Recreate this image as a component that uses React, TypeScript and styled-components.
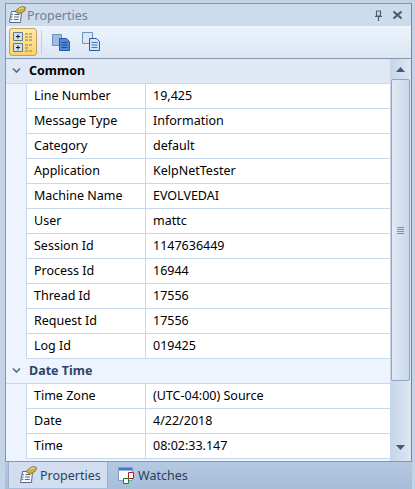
import React from 'react';
import styled, { createGlobalStyle } from 'styled-components';

const GlobalStyle = createGlobalStyle`
  html, body {
    margin: 0;
    padding: 0;
    background: #c3d3e8;
  }
  * {
    box-sizing: border-box;
  }
`;

const groups = [
  {
    name: 'Common',
    active: true,
    rows: [
      ['Line Number', '19,425'],
      ['Message Type', 'Information'],
      ['Category', 'default'],
      ['Application', 'KelpNetTester'],
      ['Machine Name', 'EVOLVEDAI'],
      ['User', 'mattc'],
      ['Session Id', '1147636449'],
      ['Process Id', '16944'],
      ['Thread Id', '17556'],
      ['Request Id', '17556'],
      ['Log Id', '019425'],
    ],
  },
  {
    name: 'Date Time',
    active: false,
    rows: [
      ['Time Zone', '(UTC-04:00) Source'],
      ['Date', '4/22/2018'],
      ['Time', '08:02:33.147'],
    ],
  },
];

function PropertiesIcon() {
  return (
    <svg width='18' height='18' viewBox='0 0 18 18'>
      <path d='M3.5 5.5h10l-1 11h-11z' fill='#f6f8fb' stroke='#5a6a80' />
      <path d='M3.5 8.5h1.5M6.5 8.5h5M3 11h1.5M6 11h5M2.8 13.5h1.5M5.8 13.5h5' stroke='#52698c' />
      <path d='M7 5.5l4-3.5 3-1.5 3.5 1-1 3.5-3 2-3.5.5z' fill='#cfae42' stroke='#75692f' strokeWidth='0.8' />
      <path d='M11 3l3-1.2 2 .6' fill='none' stroke='#f2e59c' />
    </svg>
  );
}

function WatchesIcon() {
  return (
    <svg width='17' height='17' viewBox='0 0 17 17'>
      <path d='M0.5 0.5h14v13h-14z' fill='#fdfdff' stroke='#7f9cc6' />
      <path d='M1 1h13v2.5H1z' fill='#3f78d0' />
      <path d='M10.5 5.5h5v6h-5z' fill='#fff' stroke='#a81f1f' />
      <path d='M5.5 11.5h5v5h-5z' fill='#fff' stroke='#1a7f28' />
    </svg>
  );
}

function CategorizedIcon() {
  return (
    <svg width='24' height='24' viewBox='0 0 24 24'>
      <path d='M2.5 2.5h9v8h-9zM2.5 13.5h9v8h-9z' fill='#cfe0f2' stroke='#62799a' />
      <path d='M5 6.5h4M7 4.5v4M5 17.5h4M7 15.5v4' stroke='#15181f' />
      <path d='M14 4h3M18 4h3M14 7h3M18 7h3M14 10h3M18 10h3M14 15h3M18 15h3M14 18h3M14 21h3M18 21h3' stroke='#a99c62' strokeWidth='1.5' />
    </svg>
  );
}

function PagesIcon({ flip }: { flip?: boolean }) {
  return (
    <svg width='20' height='20' viewBox='0 0 20 20'>
      <path
        d={flip ? 'M0.5 0.5h10v11h-10z' : 'M0.5 2.5h9v11h-9z'}
        fill={flip ? '#dce7f4' : '#9cbde4'}
        stroke='#6f90bd'
      />
      <path d='M7.5 6.5h7l3 3v9h-10z' fill={flip ? '#d3e2f4' : '#4f8ad4'} stroke='#2c5c9c' />
      <path d='M9.5 10.5h6M9.5 13h6M9.5 15.5h6' stroke={flip ? '#3f72b6' : '#1e4f96'} />
    </svg>
  );
}

export default function App() {
  return (
    <>
      <GlobalStyle />
      <Window>
        <Panel>
          <TitleBar>
            <PropertiesIcon />
            <TitleText>Properties</TitleText>
            <TitleButtons>
              <svg width='11' height='11' viewBox='0 0 11 11'>
                <path d='M3.5 1h4v5h-4zM2 6.5h7M5.5 7v4' fill='none' stroke='#4a5a78' strokeWidth='1.2' />
              </svg>
              <svg width='11' height='11' viewBox='0 0 11 11'>
                <path d='M1.5 1.5l8 7M9.5 1.5l-8 7' fill='none' stroke='#4a5a78' strokeWidth='2.2' />
              </svg>
            </TitleButtons>
          </TitleBar>
          <Toolbar>
            <ToolButton $active>
              <CategorizedIcon />
            </ToolButton>
            <ToolSeparator />
            <ToolButton>
              <PagesIcon />
            </ToolButton>
            <ToolButton>
              <PagesIcon flip />
            </ToolButton>
          </Toolbar>
          <Body>
            <Grid>
              {groups.map(group => (
                <Group key={group.name}>
                  <GroupHeader $active={group.active}>
                    <svg width='9' height='7' viewBox='0 0 9 7'>
                      <path d='M1 1.5l3.5 3.5 3.5-3.5' fill='none' stroke='#5f6b85' strokeWidth='1.7' />
                    </svg>
                    <GroupName $active={group.active}>{group.name}</GroupName>
                  </GroupHeader>
                  {group.rows.map(([label, value]) => (
                    <Row key={label}>
                      <Label>{label}</Label>
                      <Value>{value}</Value>
                    </Row>
                  ))}
                </Group>
              ))}
            </Grid>
            <ScrollBar>
              <ScrollArrow>
                <svg width='9' height='5' viewBox='0 0 9 5'>
                  <path d='M4.5 0l4.5 5H0z' fill='#46587a' />
                </svg>
              </ScrollArrow>
              <Thumb>
                <Grip />
              </Thumb>
              <ScrollArrow>
                <svg width='9' height='5' viewBox='0 0 9 5'>
                  <path d='M4.5 5L0 0h9z' fill='#46587a' />
                </svg>
              </ScrollArrow>
            </ScrollBar>
          </Body>
        </Panel>
        <TabStrip>
          <Tab $active>
            <PropertiesIcon />
            Properties
          </Tab>
          <Tab>
            <WatchesIcon />
            Watches
          </Tab>
        </TabStrip>
      </Window>
    </>
  );
}

const Window = styled.div`
  width: 415px;
  height: 489px;
  padding: 3px 3px 0 5px;
  display: flex;
  flex-direction: column;
  overflow: hidden;
  font-family: 'Noto Sans', sans-serif;
  font-size: 12.5px;
  color: #000;
  background: #c3d3e8;
`;

const Panel = styled.div`
  height: 458px;
  display: flex;
  flex-direction: column;
  border: 1px solid #8496b2;
  border-bottom: none;
  border-right: 1px solid #6f86a6;
`;

const TitleBar = styled.div`
  height: 22px;
  flex: none;
  display: flex;
  align-items: center;
  gap: 1px;
  padding: 0 8px 0 2px;
  background: #cddbeb;
`;

const TitleText = styled.span`
  flex: 1;
  font-size: 12.5px;
  color: #6d809f;
`;

const TitleButtons = styled.div`
  display: flex;
  align-items: center;
  gap: 8px;
`;

const Toolbar = styled.div`
  height: 33px;
  flex: none;
  display: flex;
  align-items: center;
  padding: 0 3px;
  border-bottom: 1px solid #8496b2;
  background: linear-gradient(#edf4fd, #dbe6f3);
`;

const ToolButton = styled.div<{ $active?: boolean }>`
  width: 28px;
  height: 28px;
  margin-right: 2px;
  display: flex;
  align-items: center;
  justify-content: center;
  border-radius: 3px;
  border: 1px solid ${p => (p.$active ? '#c2a05c' : 'transparent')};
  background: ${p => (p.$active ? 'linear-gradient(#fde9a8, #fbd36f)' : 'transparent')};
`;

const ToolSeparator = styled.div`
  width: 1px;
  height: 24px;
  margin: 0 6px 0 2px;
  background: #c0cfe2;
`;

const Body = styled.div`
  flex: 1;
  min-height: 0;
  display: flex;
`;

const Grid = styled.div`
  flex: 1;
  min-width: 0;
  overflow: hidden;
  background: #edf4fd;
`;

const Group = styled.div``;

const GroupHeader = styled.div<{ $active?: boolean }>`
  height: 25px;
  padding: 0 0 1px 6px;
  display: flex;
  align-items: center;
  gap: 8px;
  background: ${p => (p.$active ? '#dfe8f4' : '#edf4fd')};
  border-bottom: 1px solid #c5d8f0;
`;

const GroupName = styled.span<{ $active?: boolean }>`
  font-weight: bold;
  font-size: 12.5px;
  color: ${p => (p.$active ? '#000' : '#2f4468')};
`;

const Row = styled.div`
  height: 25px;
  margin-left: 20px;
  display: flex;
  background: #fff;
  border-left: 1px solid #c5d8f0;
  border-bottom: 1px solid #c5d8f0;
`;

const Label = styled.div`
  width: 119px;
  flex: none;
  padding-left: 7px;
  line-height: 24px;
  border-right: 1px solid #c5d8f0;
`;

const Value = styled.div`
  flex: 1;
  padding-left: 7px;
  line-height: 24px;
`;

const ScrollBar = styled.div`
  width: 21px;
  flex: none;
  display: flex;
  flex-direction: column;
  padding-bottom: 4px;
  background: linear-gradient(to right, #c6d5e8, #dde7f3);
`;

const ScrollArrow = styled.div`
  height: 20px;
  flex: none;
  display: flex;
  align-items: center;
  justify-content: center;
`;

const Thumb = styled.div`
  width: 19px;
  height: 302px;
  margin-left: 1px;
  margin-bottom: auto;
  display: flex;
  align-items: center;
  justify-content: center;
  border: 1px solid #8ea6c8;
  border-radius: 2px;
  background: linear-gradient(to right, #e2eaf5, #c8d7e9);
`;

const Grip = styled.div`
  width: 7px;
  height: 7px;
  background: repeating-linear-gradient(#7e8fab 0 1px, transparent 1px 2px);
`;

const TabStrip = styled.div`
  flex: 1;
  display: flex;
  align-items: flex-start;
  padding-left: 3px;
  border-top: 1px solid #8496b2;
  background: linear-gradient(#b5c9e2, #a6bcd8);
`;

const Tab = styled.div<{ $active?: boolean }>`
  height: 26px;
  width: ${p => (p.$active ? '100px' : 'auto')};
  padding: 0 0 0 10px;
  display: flex;
  align-items: center;
  gap: 3px;
  font-size: 12.5px;
  color: #2c3e60;
  background: ${p => (p.$active ? '#d2deef' : 'transparent')};
  border-left: ${p => (p.$active ? '1px solid #9eb2ce' : 'none')};
  border-right: ${p => (p.$active ? '1px solid #9eb2ce' : 'none')};
`;
